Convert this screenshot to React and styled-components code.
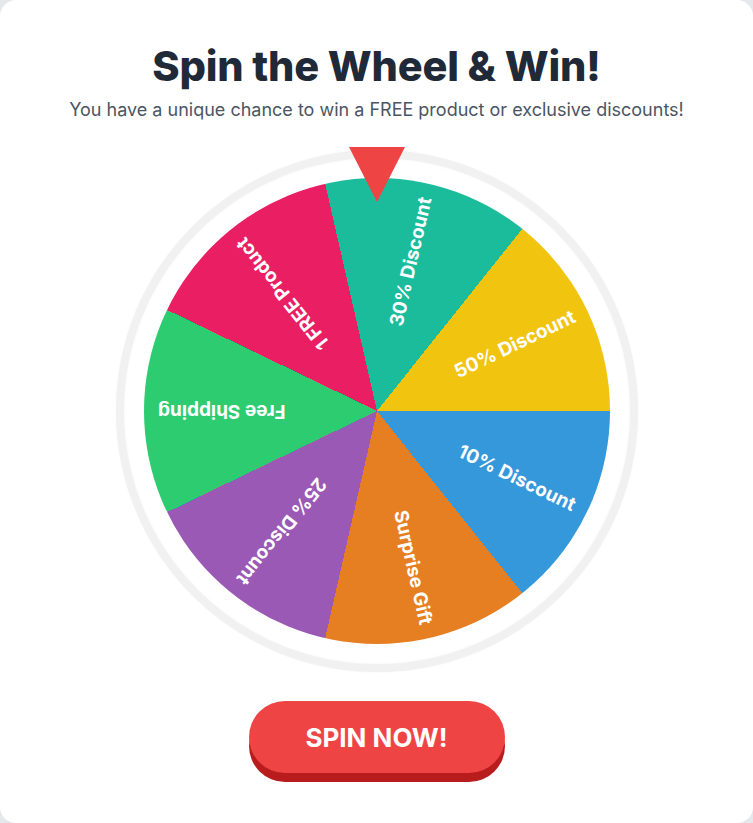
import React from "react";
import styled, { createGlobalStyle } from "styled-components";

const prizes = [
  { label: "10% Discount", color: "#3498db" },
  { label: "Surprise Gift", color: "#e67e22" },
  { label: "25% Discount", color: "#9b59b6" },
  { label: "Free Shipping", color: "#2ecc71" },
  { label: "1 FREE Product", color: "#e91e63" },
  { label: "30% Discount", color: "#1abc9c" },
  { label: "50% Discount", color: "#f1c40f" },
];

const slice = 360 / prizes.length;

// conic-gradient starts at 12 o'clock, the first slice starts at 3 o'clock
const wheelBackground = `conic-gradient(from 90deg, ${prizes
  .map((p, i) => `${p.color} ${i * slice}deg ${(i + 1) * slice}deg`)
  .join(", ")})`;

const App = () => {
  return (
    <>
      <GlobalStyle />
      <Card>
        <Title>Spin the Wheel &amp; Win!</Title>
        <Subtitle>
          You have a unique chance to win a FREE product or exclusive discounts!
        </Subtitle>
        <WheelArea>
          <Pointer />
          <WheelRing>
            <Wheel style={{ background: wheelBackground }}>
              {prizes.map((p, i) => (
                <Label key={p.label} $angle={i * slice + slice / 2}>
                  {p.label}
                </Label>
              ))}
            </Wheel>
          </WheelRing>
        </WheelArea>
        <SpinButton>SPIN NOW!</SpinButton>
      </Card>
    </>
  );
};

export default App;

const GlobalStyle = createGlobalStyle`
  html, body {
    margin: 0;
    padding: 0;
    background: #e5e7eb;
  }
  body {
    font-family: Inter, "Noto Sans", sans-serif;
  }
`;

const Card = styled.main`
  width: 753px;
  height: 823px;
  box-sizing: border-box;
  background: #ffffff;
  border-radius: 16px;
  display: flex;
  flex-direction: column;
  align-items: center;
  padding-top: 41px;
`;

const Title = styled.h1`
  margin: 0;
  font-size: 41.5px;
  line-height: 50px;
  font-weight: 800;
  color: #1f2937;
  letter-spacing: -0.2px;
`;

const Subtitle = styled.p`
  margin: 7px 0 0;
  font-size: 18px;
  line-height: 24px;
  color: #4b5563;
`;

const WheelArea = styled.div`
  position: relative;
  margin-top: 28px;
`;

const Pointer = styled.div`
  position: absolute;
  top: -3px;
  left: 50%;
  transform: translateX(-50%);
  width: 0;
  height: 0;
  border-left: 28px solid transparent;
  border-right: 28px solid transparent;
  border-top: 55px solid #ef4444;
  z-index: 2;
`;

const WheelRing = styled.div`
  width: 522px;
  height: 522px;
  box-sizing: border-box;
  border-radius: 50%;
  border: 8px solid #f1f1f1;
  padding: 20px;
  background: #ffffff;
  box-shadow: inset 0 0 3px rgba(0, 0, 0, 0.04), 0 0 2px rgba(0, 0, 0, 0.05);
`;

const Wheel = styled.div`
  position: relative;
  width: 466px;
  height: 466px;
  border-radius: 50%;
  overflow: hidden;
`;

const Label = styled.div`
  position: absolute;
  left: 50%;
  top: 50%;
  width: 233px;
  height: 24px;
  margin-top: -12px;
  transform-origin: 0 50%;
  transform: rotate(${(p) => p.$angle}deg);
  box-sizing: border-box;
  padding-right: 14px;
  text-align: right;
  color: #ffffff;
  font-size: 19px;
  line-height: 24px;
  font-weight: 700;
  white-space: nowrap;
`;

const SpinButton = styled.button`
  margin-top: 29px;
  width: 256px;
  height: 72px;
  border: none;
  border-radius: 36px;
  background: #ef4444;
  color: #ffffff;
  font-family: Inter, "Noto Sans", sans-serif;
  font-size: 26px;
  font-weight: 700;
  box-shadow: 0 9px 0 #b91c1c;
  cursor: pointer;
`;
